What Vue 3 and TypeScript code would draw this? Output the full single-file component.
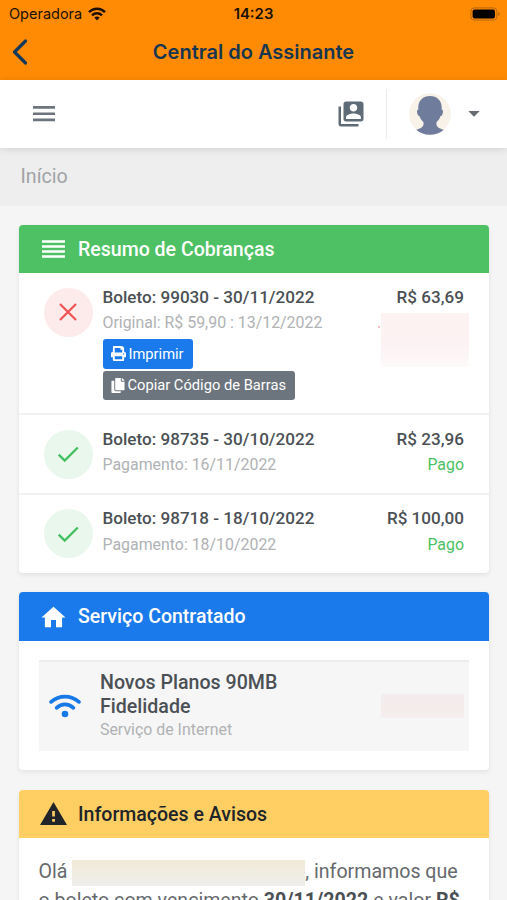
<script setup lang="ts">
interface Invoice {
  id: number
  due: string
  detail: string
  amount: string
  paid: boolean
}

const invoices: Invoice[] = [
  { id: 99030, due: '30/11/2022', detail: 'Original: R$ 59,90 : 13/12/2022', amount: 'R$ 63,69', paid: false },
  { id: 98735, due: '30/10/2022', detail: 'Pagamento: 16/11/2022', amount: 'R$ 23,96', paid: true },
  { id: 98718, due: '18/10/2022', detail: 'Pagamento: 18/10/2022', amount: 'R$ 100,00', paid: true },
]
</script>

<template>
  <div class="screen">
    <header class="native">
      <div class="status">
        <div class="carrier">
          <span>Operadora</span>
          <svg class="signal" viewBox="0 0 18 14" fill="none" stroke="#1c1000" stroke-width="2.5">
            <path d="M1 5.2C5.4.6 12.6.6 17 5.2" />
            <path d="M4 8.4c2.8-2.8 7.2-2.8 10 0" />
            <path d="M6.3 10.6c1.5-1.5 3.9-1.5 5.4 0L9 13.4z" fill="#1c1000" stroke="none" />
          </svg>
        </div>
        <b class="clock">14:23</b>
        <svg class="battery" viewBox="0 0 31 14">
          <rect x=".9" y=".9" width="26" height="12.2" rx="3.4" fill="none" stroke="#b9660a" stroke-width="1" />
          <rect x="2.6" y="2.6" width="22.4" height="8.8" rx="1.8" fill="#050300" />
          <path d="M28.3 4.8c2 .8 2 3.6 0 4.4z" fill="#b9660a" />
        </svg>
      </div>
      <div class="titlebar">
        <svg class="back" viewBox="0 0 18 28" fill="none" stroke="#14395a" stroke-width="3.2" stroke-linecap="round" stroke-linejoin="round">
          <path d="M14.5 3 3.500 14l11 11" />
        </svg>
        <h1>Central do Assinante</h1>
        <span class="balance"></span>
      </div>
    </header>

    <nav class="toolbar">
      <svg class="menu" viewBox="0 0 22 16" fill="#6c757d">
        <path d="M0 0h22v2.700H0zM0 6.400h22v2.700H0zM0 12.600h22v2.700H0z" />
      </svg>
      <svg class="contacts" viewBox="0 0 24 24" fill="#5f6c77">
        <path d="M4 6H2v14c0 1.100.9 2 2 2h14v-2H4V6zm16-4H8c-1.100 0-2 .9-2 2v12c0 1.100.9 2 2 2h12c1.100 0 2-.9 2-2V4c0-1.100-.9-2-2-2zm-6 2c1.660 0 3 1.340 3 3s-1.340 3-3 3-3-1.340-3-3 1.340-3 3-3zm6 12H8v-1.500c0-1.990 4-3 6-3s6 1.010 6 3V16z" />
      </svg>
      <span class="divider"></span>
      <svg class="avatar" viewBox="0 0 42 42">
        <circle cx="21" cy="21" r="20.800" fill="#f8f2e8" />
        <path d="M21 3c-7 0-11.700 4.600-11.700 11.300v2.200c-1.600.3-1.500 2.200-.9 4.200.4 1.400 1 2.200 2 2.300.9 2.500 2.200 4.500 4 6.100 1 4.500-2 6.500-7.200 7.600C11 40.200 15.700 41.800 21 41.800s10-1.600 13.800-5.100c-5.200-1.100-8.200-3.100-7.200-7.600 1.800-1.600 3.100-3.600 4-6.100 1-.1 1.600-.9 2-2.300.6-2 .7-3.900-.9-4.200v-2.200C32.700 7.600 28 3 21 3z" fill="#707c9c" />
      </svg>
      <svg class="caret" viewBox="0 0 12 6" fill="#656b70"><path d="M.3 0h11.400L6 5.800z" /></svg>
    </nav>

    <div class="crumb">Início</div>

    <main>
      <section class="card">
        <div class="head green">
          <svg viewBox="0 0 27 24" fill="#fff"><path d="M2 3.200h23v2.500H2zM2 8.300h23v2.500H2zM2 13.300h23v2.500H2zM2 18.300h23v2.500H2z" /></svg>
          <h2>Resumo de Cobranças</h2>
        </div>
        <article v-for="invoice in invoices" :key="invoice.id" class="invoice" :class="{ open: !invoice.paid }">
          <span class="mark" :class="invoice.paid ? 'ok' : 'due'">
            <svg v-if="invoice.paid" viewBox="0 0 24 24" fill="none" stroke="#43bf60" stroke-width="2.300"><path d="m2.700 12.600 6 6L21.800 5.500" /></svg>
            <svg v-else viewBox="0 0 24 24" fill="none" stroke="#ee5253" stroke-width="2.200"><path d="m4 4 16 16M20 4 4 20" /></svg>
          </span>
          <div class="info">
            <h3>Boleto: {{ invoice.id }} - {{ invoice.due }}</h3>
            <p>{{ invoice.detail }}</p>
            <div v-if="!invoice.paid" class="actions">
              <button class="primary">
                <svg viewBox="0 0 512 512" fill="#fff"><path d="M448 192V77.300a32 32 0 0 0-9.400-22.600L393.400 9.400A32 32 0 0 0 370.700 0H96a32 32 0 0 0-32 32v160c-35.300 0-64 28.700-64 64v112a16 16 0 0 0 16 16h48v96a32 32 0 0 0 32 32h320a32 32 0 0 0 32-32v-96h48a16 16 0 0 0 16-16V256c0-35.300-28.700-64-64-64zm-64 256H128v-96h256v96zm0-224H128V64h192v48a16 16 0 0 0 16 16h48v96zm48 72a24 24 0 1 1 0-48 24 24 0 0 1 0 48z" /></svg>
                <span>Imprimir</span>
              </button>
              <button class="secondary">
                <svg viewBox="0 0 448 512" fill="#fff"><path d="M320 448v40a24 24 0 0 1-24 24H24a24 24 0 0 1-24-24V120a24 24 0 0 1 24-24h72v296a56 56 0 0 0 56 56h168zm0-344V0H152a24 24 0 0 0-24 24v368a24 24 0 0 0 24 24h272a24 24 0 0 0 24-24V128H344a24 24 0 0 1-24-24zm121-31L375 7a24 24 0 0 0-17-7h-6v96h96v-6a24 24 0 0 0-7-17z" /></svg>
                <span>Copiar Código de Barras</span>
              </button>
            </div>
          </div>
          <div class="sum">
            <h3>{{ invoice.amount }}</h3>
            <p v-if="invoice.paid">Pago</p>
            <div v-else class="masked"><i></i><span></span></div>
          </div>
        </article>
      </section>

      <section class="card service">
        <div class="head blue">
          <svg viewBox="0 0 27 24" fill="#fff"><path d="M11 22.300v-7.200h5v7.200h6.100v-9.900h3.400L13.500 1.700 1.500 12.400h3.400v9.900z" /></svg>
          <h2>Serviço Contratado</h2>
        </div>
        <div class="body">
          <div class="plan">
            <svg class="wifi" viewBox="0 0 32 24" fill="none" stroke="#1779e8" stroke-width="3.700" stroke-linecap="round">
              <path d="M2.100 7.900c8-7.100 19.800-7.100 27.800 0" />
              <path d="M7.600 13.800c4.900-4.500 11.900-4.500 16.800 0" />
              <circle cx="16" cy="20" r="3.300" fill="#1779e8" stroke="none" />
            </svg>
            <div class="name">
              <h4>Novos Planos 90MB Fidelidade</h4>
              <p>Serviço de Internet</p>
            </div>
            <span class="price"></span>
          </div>
        </div>
      </section>

      <section class="card">
        <div class="head yellow">
          <svg viewBox="0 0 27 24"><path fill="#212529" fill-rule="evenodd" d="M0 23 13.500 0 27 23zM12.200 8.900v5.500h2.700V8.900zm0 8v2.800h2.700v-2.800z" /></svg>
          <h2>Informações e Avisos</h2>
        </div>
        <p class="notice">Olá <span class="person"></span>, informamos que<br>o boleto com vencimento <b>30/11/2022</b> e valor <b>R$</b></p>
      </section>
    </main>
  </div>
</template>

<style>
body {
  margin: 0;
  overflow: hidden;
}
</style>

<style scoped>
* {
  box-sizing: border-box;
}
h1, h2, h3, h4, p {
  margin: 0;
  font-weight: 500;
}
svg {
  display: block;
  flex: none;
}
.screen {
  height: 900px;
  overflow: hidden;
  background: #f5f5f5;
  color: #4b5055;
  font-family: Roboto, sans-serif;
}
.native {
  height: 79.500px;
  background: #ff8b05;
  font-family: Inter, sans-serif;
}
.status {
  display: grid;
  grid-template-columns: 1fr auto 1fr;
  align-items: center;
  height: 27px;
  padding: 0 6px;
  color: #1c1000;
  font-size: 14.500px;
}
.carrier {
  display: flex;
  align-items: center;
  gap: 6px;
  padding-left: 3px;
}
.signal {
  width: 18px;
  height: 14px;
}
.clock {
  font-weight: 600;
  font-size: 14.900px;
}
.battery {
  justify-self: end;
  width: 31px;
  height: 14px;
}
.titlebar {
  display: flex;
  align-items: center;
  justify-content: space-between;
  height: 50px;
  padding: 0 11px;
}
.back {
  width: 18px;
  height: 28px;
}
.balance {
  width: 18px;
}
h1 {
  color: #17364f;
  font-weight: 600;
  font-size: 20px;
}
.toolbar {
  position: relative;
  display: flex;
  align-items: center;
  height: 68.500px;
  padding: 0 27.500px 0 32.500px;
  background: #fff;
  box-shadow: 0 1px 8px rgba(0, 0, 0, 0.13);
}
.menu {
  width: 22px;
  height: 16px;
  margin-right: auto;
}
.contacts {
  width: 30px;
  height: 30px;
  margin-right: 20px;
}
.divider {
  width: 1px;
  height: 50px;
  margin-right: 22px;
  background: #e9ebed;
}
.avatar {
  width: 42px;
  height: 42px;
  margin-right: 17px;
}
.caret {
  width: 12px;
  height: 6px;
}
.crumb {
  height: 58px;
  padding-left: 20.500px;
  background: #eee;
  color: #a0a3a5;
  font-size: 19.600px;
  line-height: 58px;
}
main {
  display: grid;
  gap: 19.500px;
  padding: 18.500px 18.500px 0 19px;
}
.card {
  overflow: hidden;
  border-radius: 4px;
  background: #fff;
  box-shadow: 0 2px 5px rgba(0, 0, 0, 0.08);
}
.head {
  display: flex;
  align-items: center;
  gap: 11px;
  height: 48.500px;
  padding: 1px 0 0 21px;
  color: #fff;
}
.head svg {
  width: 27px;
  height: 24px;
}
.head h2 {
  padding-top: 1px;
  font-size: 19.550px;
  line-height: 24px;
}
.green { background: #4dc163; }
.blue { background: #1a7aeb; }
.yellow {
  background: #ffcf64;
  color: #212529;
}
.invoice {
  display: flex;
  height: 79.500px;
  padding: 13.500px 24.500px 0;
  border-bottom: 2px solid #f1f1f1;
}
.invoice.open {
  height: 142px;
}
.invoice:last-child {
  height: 78px;
  border: 0;
}
.mark {
  display: grid;
  place-items: center;
  flex: none;
  width: 49px;
  height: 49px;
  margin: 1px 10px 0 0;
  border-radius: 50%;
}
.mark svg {
  width: 24px;
  height: 24px;
}
.due { background: #fdeaea; }
.ok { background: #e9f7ec; }
.info {
  flex: 1;
}
h3 {
  font-size: 17.100px;
  line-height: 20px;
}
.info p,
.sum p {
  margin-top: 6.500px;
  color: #b0b2b4;
  font-weight: 400;
  font-size: 15.900px;
  line-height: 20px;
}
.sum {
  text-align: right;
}
.sum p {
  color: #4dc163;
}
.actions {
  display: grid;
  justify-items: start;
  gap: 2px;
  margin-top: 6px;
}
button {
  display: flex;
  align-items: center;
  height: 29.500px;
  padding: 0 9px 0 8px;
  border: 0;
  border-radius: 3px;
  color: #fff;
  font-family: inherit;
  font-size: 14.700px;
}
.primary {
  gap: 3px;
  background: #1a7aeb;
}
.primary svg {
  width: 15px;
  height: 15px;
}
.secondary {
  gap: 3px;
  background: #6c757d;
}
.secondary svg {
  width: 14px;
  height: 15px;
}
.masked {
  display: flex;
  justify-content: flex-end;
  gap: 1px;
  margin: 6.500px -5px 0 0;
}
.masked i {
  width: 2px;
  height: 2px;
  margin-top: 13px;
  border-radius: 50%;
  background: #f5a8aa;
}
.masked span {
  width: 88px;
  height: 54px;
  background: linear-gradient(#fdf3f3, #fdf2f3 60%, #fefafa);
}
.body {
  padding: 19.500px;
}
.plan {
  display: flex;
  align-items: center;
  height: 90.500px;
  padding: 0 5px 0 10px;
  border-top: 2px solid #ededee;
  background: #f6f6f6;
}
.wifi {
  width: 32px;
  height: 24px;
}
.name {
  width: 210px;
  margin-left: 19.500px;
}
h4 {
  font-size: 19.600px;
  line-height: 23.500px;
}
.name p {
  color: #b0b2b4;
  font-weight: 400;
  font-size: 15.900px;
  line-height: 23px;
}
.price {
  width: 83px;
  height: 24px;
  margin-left: auto;
  background: linear-gradient(#f3eded, #f5ecec 70%, #f6efef);
}
.notice {
  height: 110px;
  padding: 20px 19.500px;
  color: #65696d;
  font-weight: 400;
  font-size: 19.600px;
  line-height: 28.500px;
  white-space: nowrap;
}
.notice b {
  color: #4b5055;
}
.person {
  display: inline-block;
  width: 233px;
  height: 26px;
  background: linear-gradient(#f1ead8, #eeeeeb);
  vertical-align: -8px;
}
</style>
